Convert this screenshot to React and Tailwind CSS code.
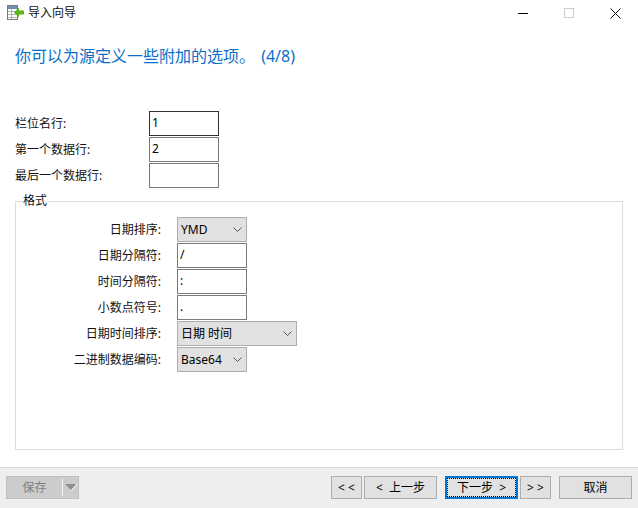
import React from 'react';

const fontCls = "font-['Noto_Sans','Noto_Sans_CJK_SC',sans-serif]";

function Chevron() {
  return (
    <svg width="9" height="5" viewBox="0 0 9 5" className="shrink-0" fill="none" stroke="#555" strokeWidth="1">
      <path d="M0.5 0.5 L4.5 4.5 L8.5 0.5" />
    </svg>
  );
}

function TextBox({ value, active }) {
  return (
    <input
      readOnly
      value={value}
      className={`w-[70px] h-[25px] border px-[2px] pb-[2px] text-[12px] text-black bg-white outline-none ${active ? 'border-[#333]' : 'border-[#7a7a7a]'}`}
    />
  );
}

function Combo({ value, wide }) {
  return (
    <div className={`h-[25px] ${wide ? 'w-[120px]' : 'w-[70px]'} flex items-center justify-between pl-[3px] pr-[4px] border border-[#adadad] bg-[#e1e1e1] text-[12px] text-black`}>
      <span>{value}</span>
      <Chevron />
    </div>
  );
}

function Btn({ children, cls = 'w-[73px]' }) {
  return (
    <button className={`h-[23px] ${cls} flex items-center justify-center border border-[#adadad] bg-[#e1e1e1] text-[12px] text-black whitespace-pre`}>
      {children}
    </button>
  );
}

const topRows = [
  { label: '栏位名行:', value: '1', active: true },
  { label: '第一个数据行:', value: '2' },
  { label: '最后一个数据行:', value: '' },
];

const formatRows = [
  { label: '日期排序:', combo: 'YMD' },
  { label: '日期分隔符:', value: '/' },
  { label: '时间分隔符:', value: ':' },
  { label: '小数点符号:', value: '.' },
  { label: '日期时间排序:', combo: '日期 时间', wide: true },
  { label: '二进制数据编码:', combo: 'Base64' },
];

export default function App() {
  return (
    <div className={`w-[638px] h-[508px] flex flex-col bg-white text-[12px] text-[#111] overflow-hidden ${fontCls}`}>
      {/* title bar */}
      <div className="h-[26px] shrink-0 flex items-center">
        <svg width="17" height="16" viewBox="0 0 17 16" className="ml-[7px]">
          <rect x="0.5" y="0.5" width="10" height="14" fill="#fff" stroke="#7b7b7b" />
          <rect x="1" y="1" width="9" height="3" fill="#6f8fb5" />
          <path d="M1 6.5 H10 M1 9.5 H10 M1 12.5 H10 M4.5 4 V14" stroke="#b0b0b0" />
          <path d="M7 7.5 L12 2.5 V5.5 H17 V9.5 H12 V12.5 Z" fill="#5cb516" />
        </svg>
        <span className="ml-[4px]">导入向导</span>
        <div className="ml-auto flex items-center h-full">
          <div className="w-[46px] flex justify-center">
            <div className="w-[10px] h-px bg-black" />
          </div>
          <div className="w-[46px] flex justify-center">
            <div className="w-[10px] h-[10px] border border-[#cccccc]" />
          </div>
          <div className="w-[46px] flex justify-center">
            <svg width="11" height="11" viewBox="0 0 11 11" stroke="#111" strokeWidth="1">
              <path d="M0.5 0.5 L10.5 10.5 M10.5 0.5 L0.5 10.5" />
            </svg>
          </div>
        </div>
      </div>

      {/* heading */}
      <div className="mt-[18px] ml-[15px] h-[24px] leading-[24px] text-[16px] text-[#0a6fc9] whitespace-pre">
        你可以为源定义一些附加的选项。 <span className="ml-[2px]">(4/8)</span>
      </div>

      {/* rows */}
      <div className="mt-[43px] ml-[15px] flex flex-col gap-px">
        {topRows.map((r) => (
          <div key={r.label} className="flex items-center h-[25px]">
            <span className="w-[134px]">{r.label}</span>
            <TextBox value={r.value} active={r.active} />
          </div>
        ))}
      </div>

      {/* format group */}
      <fieldset className="mt-[5px] mx-[15px] h-[257px] border border-[#dcdcdc] pl-[7px]">
        <legend className="leading-[16px]">格式</legend>
        <div className="mt-[8px] flex flex-col gap-px">
          {formatRows.map((r) => (
            <div key={r.label} className="flex items-center h-[25px]">
              <span className="w-[138px] text-right">{r.label}</span>
              <div className="ml-[16px]">
                {r.combo ? <Combo value={r.combo} wide={r.wide} /> : <TextBox value={r.value} />}
              </div>
            </div>
          ))}
        </div>
      </fieldset>

      {/* footer */}
      <div className="mt-auto h-[41px] shrink-0 border-t border-[#d6d6d6] bg-[#eeeeee] flex items-start pt-[8px] pl-[6px] pr-[6px]">
        <div className="w-[73px] h-[23px] flex items-center border border-[#bfbfbf] bg-[#cccccc] text-[#7f7f7f]">
          <span className="w-[55px] text-center">保存</span>
          <div className="w-px h-[17px] bg-[#f4f4f4]" />
          <svg width="14" height="9" viewBox="0 0 14 9" className="ml-[1px]">
            <path d="M1 1 H13 L7 7 Z" fill="#8f8f8f" />
            <path d="M13 1 L7.5 7.5" stroke="#fff" strokeWidth="1" fill="none" />
          </svg>
        </div>
        <div className="ml-auto flex">
          <Btn cls="w-[31px]">{'< <'}</Btn>
          <div className="ml-[2px]"><Btn>{'<  上一步'}</Btn></div>
          <div className="ml-[8px]">
            <button className="relative h-[23px] w-[73px] flex items-center justify-center border-2 border-[#0078d7] bg-[#e1e1e1] text-[12px] text-black whitespace-pre">
              <span className="absolute inset-0 border border-dotted border-black" />
              {'下一步  >'}
            </button>
          </div>
          <div className="ml-[2px]"><Btn cls="w-[31px]">{'> >'}</Btn></div>
          <div className="ml-[8px]"><Btn>取消</Btn></div>
        </div>
      </div>
    </div>
  );
}
